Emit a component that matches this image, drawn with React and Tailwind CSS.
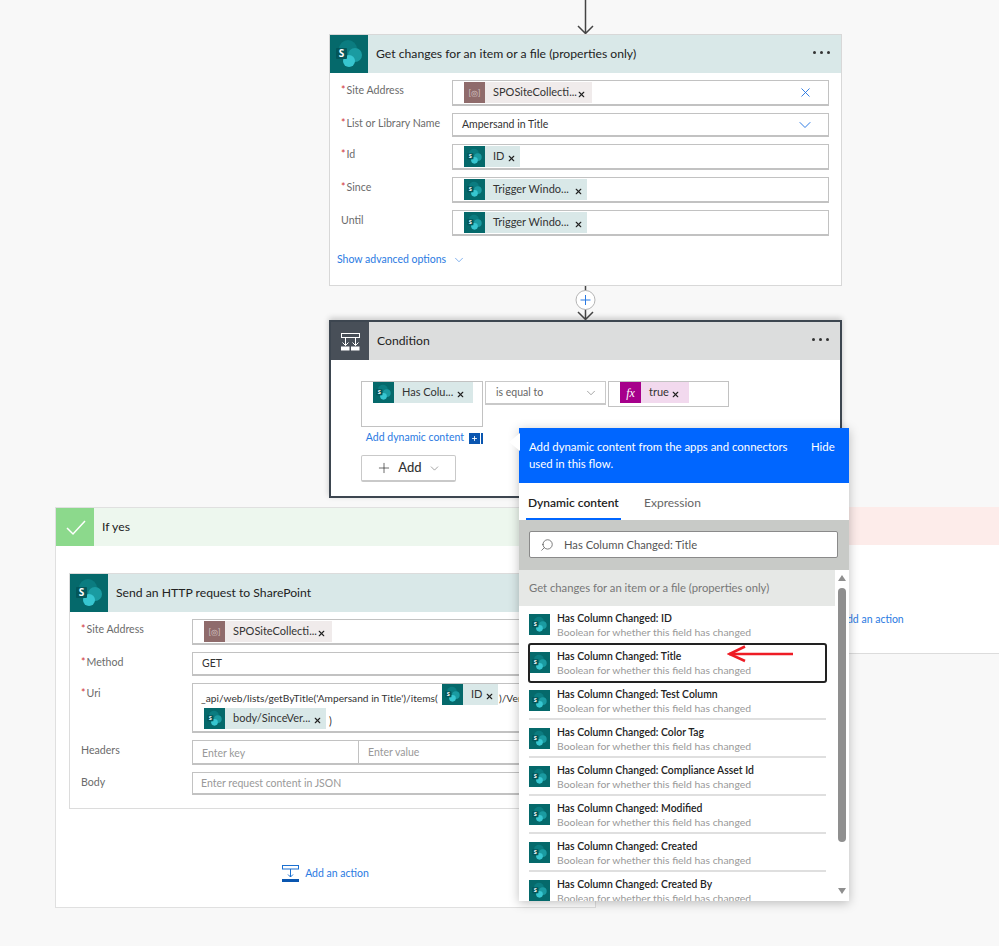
import { X, ChevronDown, Plus, Search } from 'lucide-react';

// SharePoint logo, viewBox scaled to whatever tile size is asked for
const SpLogo = ({ className }) => (
  <svg viewBox="0 0 38 38" className={className}>
    <circle cx="18" cy="14" r="9" fill="#0b7c80" />
    <circle cx="25" cy="20" r="7" fill="#1a9ba1" />
    <circle cx="19" cy="26" r="6" fill="#37c6d0" />
    <rect x="6" y="13" width="11" height="11" rx="1" fill="#03565a" />
    <text x="11.5" y="22" textAnchor="middle" fontSize="10" fontWeight="700" fill="#fff" fontFamily="Open Sans, sans-serif">S</text>
  </svg>
);

const ConditionIcon = () => (
  <svg viewBox="0 0 38 38" className="w-[38px] h-[38px]" fill="none" stroke="#fff">
    <rect x="10.5" y="11.5" width="18" height="4" />
    <path d="M14.5 15.5v8M24.5 15.5v8M11.5 20.5l3 3 3-3M21.500 20.500l3 3 3-3" />
    <rect x="10" y="24.500" width="8.500" height="4" fill="#fff" stroke="none" />
    <rect x="20" y="24.500" width="8.500" height="4" fill="#fff" stroke="none" />
  </svg>
);

const AddActionIcon = () => (
  <svg viewBox="0 0 17 17" className="w-[17px] h-[17px]" fill="none" stroke="#1a6fd0">
    <rect x="0.500" y="0.500" width="16" height="3.500" />
    <path d="M8.500 4v8M6 9.500l2.500 2.500 2.500-2.500" />
    <rect x="0" y="14" width="17" height="3" fill="#0a56b0" stroke="none" />
  </svg>
);

const Chip = ({ kind = 'sp', label, className, closeClass = 'pr-[4px]' }) => {
  const tile = {
    sp: 'bg-[#05696b]',
    var: 'bg-[#8f6b6b]',
    fx: 'bg-[#a6008b]',
  }[kind];
  const body = {
    sp: 'bg-[#d9e8e8]',
    var: 'bg-[#f0ebeb]',
    fx: 'bg-[#f2d9ee]',
  }[kind];
  return (
    <div className={`flex h-[21px] shrink-0 ${body} ${className}`}>
      <div className={`w-[21px] h-[21px] shrink-0 flex items-center justify-center ${tile}`}>
        {kind === 'sp' && <SpLogo className="w-[21px] h-[21px]" />}
        {kind === 'var' && <span className="text-[8px] text-[#d8c8c8]">[◎]</span>}
        {kind === 'fx' && <span className="text-[12px] italic text-white font-['Liberation_Serif',serif]">fx</span>}
      </div>
      <span className="ml-[8px] text-[11px] leading-[19px] text-[#333] whitespace-nowrap">{label}</span>
      <div className={`ml-auto flex items-center pt-[3px] ${closeClass}`}>
        <X size={9} strokeWidth={3} color="#222" />
      </div>
    </div>
  );
};

const Field = ({ label, required, children, className }) => (
  <div className="flex">
    <div className="w-[122px] shrink-0 pl-[11px] pt-[3px] text-[10.600px] leading-[15px] text-[#6b6b6b] whitespace-nowrap">
      {required && <span className="text-[#d13438] mr-[1px]">*</span>}
      {label}
    </div>
    <div className={`flex-1 border border-b-2 border-[#c2c2c2] bg-white ${className}`}>{children}</div>
  </div>
);

const CardHeader = ({ tile, bg, title, more, children }) => (
  <div className={`flex items-center h-[38px] ${bg}`}>
    <div className={`w-[38px] h-[38px] shrink-0 ${tile}`}>{children}</div>
    <span className="ml-[8px] pt-[1px] flex-1 text-[12.200px] text-[#222]">{title}</span>
    {more && (
      <div className="flex gap-[4px] mr-[11px] mb-[4px]">
        <span className="w-[3px] h-[3px] rounded-full bg-[#333]" />
        <span className="w-[3px] h-[3px] rounded-full bg-[#333]" />
        <span className="w-[3px] h-[3px] rounded-full bg-[#333]" />
      </div>
    )}
  </div>
);

const AddAction = ({ className }) => (
  <div className={`flex items-center gap-[6px] ${className}`}>
    <AddActionIcon />
    <span className="text-[10.500px] text-[#2a7ae2]">Add an action</span>
  </div>
);

const columnFields = ['ID', 'Title', 'Test Column', 'Color Tag', 'Compliance Asset Id', 'Modified', 'Created', 'Created By'];

const DynamicContentPopup = () => (
  <div className="absolute left-[519px] top-[428px] w-[330px] h-[473px]">
    {/* petite flèche vers la gauche */}
    <svg viewBox="0 0 11 18" className="absolute left-[-10px] top-[5px] w-[11px] h-[18px]">
      <path d="M11 0L0 9l11 9z" fill="#fff" />
    </svg>
    <div className="h-full bg-white shadow-[0_2px_10px_rgba(0,0,0,0.25)] overflow-hidden flex flex-col">
      <div className="flex h-[55px] shrink-0 bg-[#0066ff] text-white text-[11.400px] leading-[17px] pl-[10px] pt-[10px]">
        <p className="w-[282px]">Add dynamic content from the apps and connectors used in this flow.</p>
        <span>Hide</span>
      </div>
      <div className="flex h-[37px] shrink-0 pl-[7px] text-[12px] whitespace-nowrap">
        <span className="px-[2px] w-[95px] h-[37px] border-b-2 border-[#0066ff] leading-[39px] font-semibold text-[#222]">Dynamic content</span>
        <span className="ml-[23px] leading-[39px] text-[#666]">Expression</span>
      </div>
      <div className="h-[50px] shrink-0 bg-[#c8cac7] pt-[11px] pl-[10px]">
        <div className="flex items-center w-[309px] h-[27px] bg-white border border-[#8a8a8a] rounded-[2px] pl-[10px]">
          <Search size={14} strokeWidth={1.3} color="#555" className="-scale-x-100" />
          <span className="ml-[10px] pt-[1px] text-[11.200px] text-[#555]">Has Column Changed: Title</span>
        </div>
      </div>
      <div className="flex flex-1 min-h-0">
        <div className="w-[316px] shrink-0">
          <div className="h-[36px] bg-[#e6e8e6] pl-[10px] text-[11.250px] leading-[36px] text-[#777]">
            Get changes for an item or a file (properties only)
          </div>
          <div className="pl-[10px] pr-[9px]">
            {columnFields.map((field, i) => (
              <div
                key={field}
                className={`flex h-[38px] pt-[8px] ${i > 1 ? 'border-b-2 border-[#dfdfdf]' : ''} ${i === 1 ? 'outline-2 -outline-offset-1 outline-[#222] rounded-[2px]' : ''}`}
              >
                <div className="w-[21px] h-[21px] shrink-0 bg-[#05696b]">
                  <SpLogo className="w-[21px] h-[21px]" />
                </div>
                <div className="ml-[7px] -mt-[3px] text-[10.400px] leading-[14px]">
                  <div className="font-semibold text-[#222]">Has Column Changed: {field}</div>
                  <div className="text-[#999]">Boolean for whether this field has changed</div>
                </div>
              </div>
            ))}
          </div>
        </div>
        <div className="flex-1 flex flex-col items-start pl-[3px] pt-[5px] pb-[7px]">
          <div className="w-0 h-0 border-x-[4px] border-x-transparent border-b-[6px] border-b-[#8f8f8f]" />
          <div className="w-[8px] h-[254px] mt-[7px] rounded-full bg-[#8f8f8f]" />
          <div className="mt-auto w-0 h-0 border-x-[4px] border-x-transparent border-t-[6px] border-t-[#8f8f8f]" />
        </div>
      </div>
    </div>
  </div>
);

const App = () => {
  return (
    <div className="relative w-[999px] h-[946px] overflow-hidden bg-[#f8f8f8] font-['Lato',sans-serif]">
      {/* Flèche du haut */}
      <svg viewBox="0 0 20 34" className="block ml-[575px] w-[20px] h-[34px]" fill="none" stroke="#444" strokeWidth="1.500">
        <path d="M10.500 0v33M3 26l7.500 7.500L18 26" />
      </svg>

      {/* Get changes */}
      <div className="ml-[329px] w-[513px] h-[252px] bg-white border border-[#d8d8d8]">
        <CardHeader tile="bg-[#05696b]" bg="bg-[#d9e8e8]" title="Get changes for an item or a file (properties only)" more>
          <SpLogo className="w-[38px] h-[38px]" />
        </CardHeader>
        <div className="flex flex-col gap-[7px] pt-[7px] pr-[12px]">
          <Field label="Site Address" required className="h-[26px] flex items-center pl-[11px] pr-[15px]">
            <Chip kind="var" label="SPOSiteCollecti..." className="w-[128px]" closeClass="pr-[9px]" />
            <X size={15} strokeWidth={1.4} color="#1a6fe0" className="ml-auto" />
          </Field>
          <Field label="List or Library Name" required className="h-[24px] flex items-center pl-[9px] pr-[13px]">
            <span className="pt-[1px] text-[10.500px] text-[#333]">Ampersand in Title</span>
            <ChevronDown size={20} strokeWidth={1.1} color="#1a6fe0" className="ml-auto" />
          </Field>
          <Field label="Id" required className="h-[26px] flex items-center pl-[11px]">
            <Chip label="ID" className="w-[56px]" />
          </Field>
          <Field label="Since" required className="h-[26px] flex items-center pl-[11px]">
            <Chip label="Trigger Windo..." className="w-[123px]" />
          </Field>
          <Field label="Until" className="h-[26px] flex items-center pl-[11px]">
            <Chip label="Trigger Windo..." className="w-[123px]" />
          </Field>
        </div>
        <div className="flex items-center mt-[16px] pl-[7px] text-[10.500px] text-[#2a7ae2]">
          Show advanced options
          <ChevronDown size={14} strokeWidth={1} color="#2a7ae2" className="ml-[6px]" />
        </div>
      </div>

      {/* Connecteur + */}
      <svg viewBox="0 0 22 34" className="block ml-[574px] w-[22px] h-[34px]" fill="none">
        <path d="M11.500 0v33M4 26l7.500 7.500L19 26" stroke="#444" strokeWidth="1.500" />
        <circle cx="11.500" cy="14" r="9.500" fill="#fff" stroke="#b5b5b5" />
        <path d="M11.500 9v10M6.500 14h10" stroke="#2a7ae2" />
      </svg>

      {/* Condition */}
      <div className="ml-[329px] w-[513px] h-[178px] bg-white border-2 border-[#3d4650] shadow-[0_-2px_6px_rgba(0,0,0,0.2)]">
        <CardHeader tile="bg-[#484f58]" bg="bg-[#dcdddd]" title="Condition" more>
          <ConditionIcon />
        </CardHeader>
        <div className="pl-[30px] pt-[21px]">
          <div className="flex items-start gap-[2px]">
            <div className="w-[122px] h-[46px] border border-[#c2c2c2] pl-[11px]">
              <Chip label="Has Colu..." className="w-[100px]" closeClass="pr-[8px]" />
            </div>
            <div className="flex items-center justify-between w-[121px] h-[24px] border border-b-2 border-[#c9c9c9] pl-[10px] pr-[7px] pt-[1px] text-[10.500px] text-[#666]">
              is equal to
              <ChevronDown size={14} strokeWidth={1} color="#666" />
            </div>
            <div className="w-[121px] h-[26px] border border-[#c2c2c2] pl-[11px]">
              <Chip kind="fx" label="true" className="w-[69px]" closeClass="pr-[9px]" />
            </div>
          </div>
          <div className="flex items-center justify-end w-[122px] mt-[3px] h-[16px] text-[10.500px] text-[#2a7ae2] whitespace-nowrap">
            Add dynamic content
            <div className="flex items-center justify-center ml-[5px] w-[11px] h-[11px] shrink-0 bg-[#0a56b0] text-white">
              <Plus size={7} strokeWidth={3} color="#fff" />
            </div>
            <div className="ml-[1px] w-[2px] h-[11px] shrink-0 bg-[#0a56b0]" />
          </div>
          <div className="flex items-center justify-center gap-[6px] mt-[9px] w-[95px] h-[27px] border border-b-2 border-[#c9c9c9] rounded-[2px] text-[13px] font-medium text-[#333]">
            <Plus size={16} strokeWidth={1} color="#222" />
            Add
            <ChevronDown size={13} strokeWidth={1} color="#555" />
          </div>
        </div>
      </div>

      {/* Branches */}
      <div className="flex items-start gap-[4px] ml-[55px] mt-[9px]">
        <div className="w-[541px] h-[401px] shrink-0 bg-white border border-[#e0e0e0]">
          <CardHeader tile="bg-[#8cd98c]" bg="bg-[#edf7ee]" title="If yes">
            <svg viewBox="0 0 38 38" className="w-[38px] h-[38px]" fill="none" stroke="#fff" strokeWidth="1.500">
              <path d="M11 20l6 6L29 13" />
            </svg>
          </CardHeader>
          <div className="ml-[13px] mt-[27px] w-[513px] h-[236px] border border-[#dcdcdc] bg-white">
            <CardHeader tile="bg-[#05696b]" bg="bg-[#d9e8e8]" title="Send an HTTP request to SharePoint">
              <SpLogo className="w-[38px] h-[38px]" />
            </CardHeader>
            <div className="flex flex-col gap-[7px] pt-[7px] pr-[12px]">
              <Field label="Site Address" required className="h-[26px] flex items-center pl-[11px]">
                <Chip kind="var" label="SPOSiteCollecti..." className="w-[128px]" closeClass="pr-[9px]" />
              </Field>
              <Field label="Method" required className="h-[24px] flex items-center pl-[9px]">
                <span className="pt-[1px] text-[10.500px] text-[#333]">GET</span>
              </Field>
              <Field label="Uri" required className="h-[50px] overflow-hidden pl-[8px]">
                <div className="flex items-start h-[24px] whitespace-nowrap text-[10.200px] text-[#333]">
                  <span className="pt-[7px] w-[241px] shrink-0">_api/web/lists/getByTitle('Ampersand in Title')/items(</span>
                  <Chip label="ID" className="w-[56px]" />
                  <span className="ml-[1px] pt-[7px]">)/Versions</span>
                </div>
                <div className="flex items-start h-[22px] pl-[3px] text-[10.500px] text-[#333]">
                  <Chip label="body/SinceVer..." className="w-[122px]" />
                  <span className="ml-[3px] pt-[6px]">)</span>
                </div>
              </Field>
              <Field label="Headers" className="h-[25px] flex items-center text-[10.500px] text-[#999]">
                <span className="w-[166px] h-full pl-[9px] leading-[24px] border-r border-[#c2c2c2]">Enter key</span>
                <span className="pl-[9px] pt-[1px]">Enter value</span>
              </Field>
              <Field label="Body" className="h-[23px] flex items-center pl-[8px] pt-[2px] text-[10.500px] text-[#999]">
                Enter request content in JSON
              </Field>
            </div>
          </div>
          <AddAction className="justify-center mt-[56px]" />
        </div>

        <div className="flex-1 h-[147px] bg-white border-b border-[#dcdcdc]">
          <div className="h-[38px] bg-[#fdecea]" />
          <AddAction className="ml-[217px] mt-[66px]" />
        </div>
      </div>

      <DynamicContentPopup />

      {/* Flèche rouge d'annotation */}
      <svg viewBox="0 0 68 18" className="absolute left-[727px] top-[645px] w-[68px] h-[18px]" fill="none" stroke="#ee1c25" strokeWidth="2.500">
        <path d="M2 9h64" />
        <path d="M18 1.500L2.500 9 18 16" />
      </svg>
    </div>
  );
};

export default App;
